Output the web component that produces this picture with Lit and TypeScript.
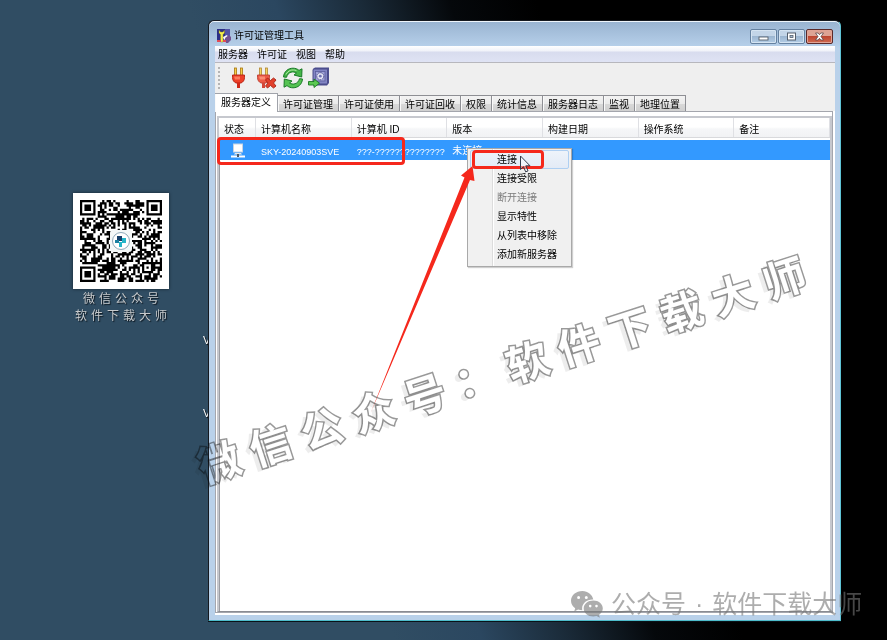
import { LitElement, html, css, svg } from "lit";
import { customElement } from "lit/decorators.js";
import { classMap } from "lit/directives/class-map.js";

const MENUS = ["服务器", "许可证", "视图", "帮助"];
const TABS = ["服务器定义", "许可证管理", "许可证使用", "许可证回收", "权限", "统计信息", "服务器日志", "监视", "地理位置"];
const COLUMNS = ["状态", "计算机名称", "计算机 ID", "版本", "构建日期", "操作系统", "备注"];
const ACTIONS = [
  { label: "连接", hot: true },
  { label: "连接受限" },
  { label: "断开连接", disabled: true },
  { label: "显示特性" },
  { label: "从列表中移除" },
  { label: "添加新服务器" },
];

const spread = (text: string) => [...text].map((ch) => html`<span>${ch}</span>`);

/** Dark modules of the QR card as one path, 37 modules a side. */
function qrPath(): string {
  const n = 37;
  let seed = 20240903;
  const rand = () => {
    seed = (seed * 1103515245 + 12345) & 0x7fffffff;
    return (seed >> 12) / 0x7ffff;
  };
  const finder = (x: number, y: number) => {
    for (const [fx, fy] of [[0, 0], [n - 7, 0], [0, n - 7]]) {
      const dx = x - fx;
      const dy = y - fy;
      if (dx >= -1 && dx <= 7 && dy >= -1 && dy <= 7) {
        const d = Math.max(Math.abs(dx - 3), Math.abs(dy - 3));
        return d === 3 || d <= 1;
      }
    }
    return undefined;
  };
  let d = "";
  for (let y = 0; y < n; y++) {
    for (let x = 0; x < n; x++) {
      let on = rand() < 0.56;
      const a = Math.max(Math.abs(x - 30), Math.abs(y - 30));
      if (a <= 2) on = a !== 1;
      const f = finder(x, y);
      if (f !== undefined) on = f;
      if (on) d += `M${x} ${y}h1v1h-1z`;
    }
  }
  return d;
}

const plug = svg`
  <rect x="3.5" y="1" width="2" height="8" fill="#f6d24a" stroke="#a87410" stroke-width=".8"/>
  <rect x="9.5" y="1" width="2" height="8" fill="#f6d24a" stroke="#a87410" stroke-width=".8"/>
  <path d="M1.5 8h12v2.500c0 3-1.500 4.500-3.500 5.500H5c-2-1-3.500-2.500-3.500-5.500z" fill="#ee4028" stroke="#b32012" stroke-width=".9"/>
  <path d="M3 9.500h6v3H4z" fill="#ff8a6c" opacity=".8"/>
  <rect x="6" y="16" width="3" height="5" fill="#cf2a1a"/>`;

@customElement("app-root")
export class AppRoot extends LitElement {
  static styles = css`
    :host {
      display: block;
      font: 10px/14px "Liberation Sans", "Noto Sans CJK SC", sans-serif;
      color: #000;
    }
    * { box-sizing: border-box; }
    button {
      font: inherit;
      color: inherit;
      background: none;
      border: 0;
      padding: 0;
      margin: 0;
      text-align: left;
      white-space: nowrap;
    }
    .desktop {
      position: relative;
      min-height: 100vh;
      overflow: hidden;
      display: grid;
      grid-template-columns: 208px minmax(0, 1fr);
      padding: 20px 46px 19px 0;
      background: linear-gradient(72deg, #304d63 0%, #304d63 36%, #2b4760 44%, #1a2a38 52%, #05080b 60%, #000 68%);
    }
    .side {
      position: relative;
      padding: 173px 0 0 73px;
    }
    .card { width: 96px; }
    .qr {
      display: block;
      width: 96px;
      height: 96px;
      background: #fff;
      box-shadow: 0 0 3px #14222e;
    }
    .caption {
      display: flex;
      justify-content: center;
      gap: 4px;
      font-family: "Noto Sans CJK SC", sans-serif;
      font-size: 12px;
      line-height: 17px;
      color: #c6c9cb;
      text-shadow: 1px 1px 1px #0b141c;
    }
    .icon-label {
      position: absolute;
      left: 203px;
      color: #fff;
      font-size: 11px;
      text-shadow: 1px 1px 1px #000;
    }
    .l1 { top: 313px; }
    .l2 { top: 386px; }

    .window {
      position: relative;
      display: flex;
      flex-direction: column;
      border: 1px solid #15191f;
      border-right-color: #5fc4d6;
      border-bottom-color: #4dbccb;
      border-radius: 6px 6px 0 0;
      padding: 0 5px 5px 6px;
      background: linear-gradient(#98b3d0, #b7d0ea 26px, #b9d1ea 27px);
      box-shadow: inset 0 1px #eef5fb, 0 1px #0a1218;
      min-width: 0;
    }
    .title {
      display: flex;
      align-items: center;
      height: 25px;
      padding: 5px 2px 0 2px;
      gap: 3px;
    }
    .title h1 { margin: 0; flex: 1; font: inherit; }
    .app-icon { width: 14px; height: 14px; }
    .caption-btns { display: flex; gap: 1px; }
    .cbtn {
      width: 27px;
      height: 15px;
      display: grid;
      place-items: center;
      border: 1px solid #6581a0;
      border-radius: 2px;
      background: linear-gradient(#c3d5e8 45%, #9cb6d1 50%, #b4cde6);
      box-shadow: inset 0 0 0 1px #d5e4f2;
    }
    .cbtn.close {
      border-color: #5b2a2a;
      background: linear-gradient(#dda394 45%, #bd4530 50%, #cf6a50);
      box-shadow: inset 0 0 0 1px #e0a395;
    }
    .client {
      flex: 1;
      display: flex;
      flex-direction: column;
      background: #fff;
      min-width: 0;
    }
    .menubar {
      display: flex;
      gap: 9px;
      height: 17px;
      padding: 1px 3px 0;
      border-bottom: 1px solid #b7b7bd;
      background: linear-gradient(#fff, #f0f2f9 5px, #d8dcee 6px, #dfe3f4);
    }
    .head { background: #efefef; }
    .toolbar {
      display: flex;
      height: 30px;
      padding: 4px 0 0 3px;
    }
    .grip {
      width: 2px;
      height: 24px;
      margin-right: 10px;
      background: repeating-linear-gradient(#b5b5b5 0 2px, #efefef 2px 4px);
    }
    .tool { width: 22px; height: 22px; margin-right: 4px; }
    .tool svg { display: block; width: 22px; height: 22px; }
    .tabs { display: flex; align-items: flex-end; height: 18px; }
    .tab {
      height: 16px;
      padding: 2px 5px 0;
      border-top: 1px solid #8e8f94;
      border-right: 1px solid #8e8f94;
      background: linear-gradient(#f3f3f3, #ebebeb 50%, #d8d8d8 55%, #d0d0d0);
      box-shadow: inset 1px 0 #fafafa;
    }
    .tab.on {
      height: 19px;
      width: 63px;
      margin-bottom: -1px;
      padding-bottom: 3px;
      position: relative;
      text-align: center;
      background: #fff;
      border-color: #a0a3aa;
    }
    .page {
      flex: 1;
      display: flex;
      margin: 0 2px 2px 0;
      padding: 4px 0 0 1px;
      border: 1px solid #a4a6ad;
    }
    .list {
      flex: 1;
      min-width: 0;
      border: 2px solid #c6c8ce;
      border-bottom: 1px solid #8a8c92;
      box-shadow: inset 1px 0 #9a9ca2, inset 0 1px #9a9ca2;
    }
    table { width: 100%; table-layout: fixed; border-collapse: separate; border-spacing: 0; }
    col.state { width: 37px; }
    th, td {
      padding: 1px 0 0 5px;
      text-align: left;
      font-weight: 400;
      white-space: nowrap;
    }
    th {
      height: 22px;
      padding-top: 3px;
      border-bottom: 2px solid #fff;
      background: linear-gradient(to left, #dfe0e4 1px, #0000 1px), linear-gradient(#fff 45%, #f5f6f8 55%, #f1f2f4);
      background-clip: padding-box;
      box-shadow: inset 0 -1px #d8d9dc;
    }
    tbody tr { background: #3399ff; color: #fff; }
    td { height: 20px; }
    td.mono { font-size: 9px; padding-top: 3px; }
    .pc { display: block; width: 16px; height: 16px; margin-left: 6px; }

    .popup {
      position: absolute;
      left: 467px;
      top: 148px;
      width: 105px;
      padding: 1px 2px 2px 2px;
      border: 1px solid #a9a9a9;
      background: linear-gradient(to right, #f1f1f1 24px, #dcdcdc 24px, #dcdcdc 25px, #fff 25px, #fff 26px, #f0f0f0 26px);
      display: flex;
      flex-direction: column;
      box-shadow: 1px 1px 1px #00000030;
    }
    .item {
      height: 19px;
      padding: 0 0 0 26px;
      border: 1px solid #0000;
      border-radius: 2px;
    }
    .item.hot { border-color: #aecff2; background: linear-gradient(#eef3fa, #e3ebf6); }
    .item:disabled { color: #7b7b7b; }
    .mark {
      position: absolute;
      border: 3px solid #f5281c;
      border-radius: 4px;
      pointer-events: none;
    }
    .m-row { left: 217px; top: 137px; width: 188px; height: 28px; }
    .m-item { left: 472px; top: 150px; width: 72px; height: 19px; }
    .arrow { position: absolute; left: 360px; top: 150px; width: 180px; height: 270px; pointer-events: none; }

    .banner {
      position: absolute;
      left: 183px;
      top: 338px;
      display: flex;
      gap: 12px;
      font: 700 42px/60px "Noto Sans CJK SC", sans-serif;
      color: #fff;
      -webkit-text-stroke: 3px #999;
      paint-order: stroke fill;
      text-shadow: -6px 2px 0 #00000012;
      transform: rotate(-18deg);
      pointer-events: none;
      mix-blend-mode: multiply;
    }
    .credit {
      position: absolute;
      left: 571px;
      bottom: 20px;
      display: flex;
      align-items: center;
      gap: 8px;
      font: 400 25px/32px "Liberation Sans", "Noto Sans CJK SC", sans-serif;
      color: #777;
      white-space: pre;
      opacity: 0.6;
    }
    .credit svg { width: 32px; height: 27px; }
    .dot { padding: 0 2px; }
  `;

  render() {
    return html`
      <main class="desktop">
        <aside class="side">
          <div class="card">
            <svg class="qr" viewBox="0 0 96 96" role="img" aria-label="QR">
              <path transform="translate(7 7) scale(2.216)" d=${qrPath()} fill="#000" shape-rendering="geometricPrecision"/>
              <rect x="37" y="37" width="22" height="22" rx="3" fill="#f4f8f8"/>
              <circle cx="48" cy="48" r="8.500" fill="#fff" stroke="#8fa9b8"/>
              <path d="M44 43h5v5h-5z" fill="#15406b"/>
              <path d="M49 45h4v5h-4zM46 49h3v5h-3z" fill="#25b5c8"/>
              <path d="M42 47h4v3h-4z" fill="#1a7fa0"/>
            </svg>
            <div class="caption">${spread("微信公众号")}</div>
            <div class="caption">${spread("软件下载大师")}</div>
          </div>
          <span class="icon-label l1">V</span>
          <span class="icon-label l2">V</span>
        </aside>

        <section class="window">
          <header class="title">
            <svg class="app-icon" viewBox="0 0 14 14">
              <rect width="12" height="12" fill="#2c2f86"/>
              <path d="M8 0h5v8H8z" fill="#5353a6"/>
              <path d="M2 1v3l1.500 1.500V13h2.500V5.500L7.500 4V1L6 3H3.500z" fill="#f3ee4e" stroke="#7c7a20" stroke-width=".4"/>
              <path d="M6 8l4-2 1 2-4 3z" fill="#fff"/>
              <path d="M8 9l4-3 2 2v3l-3 3H9z" fill="#73518f"/>
              <path d="M0 11h4v2H0zM6 11h3v2H6z" fill="#e24a56"/>
            </svg>
            <h1>许可证管理工具</h1>
            <div class="caption-btns">
              <button class="cbtn" aria-label="最小化">
                <svg width="11" height="9"><rect x="1" y="5" width="9" height="3" fill="#fff" stroke="#555f6c" stroke-width=".9"/></svg>
              </button>
              <button class="cbtn" aria-label="最大化">
                <svg width="11" height="9"><rect x="1.500" y="1" width="8" height="7" fill="#fff" stroke="#555f6c"/><rect x="4" y="3.500" width="3" height="2" fill="#a9bfd6" stroke="#555f6c" stroke-width=".8"/></svg>
              </button>
              <button class="cbtn close" aria-label="关闭">
                <svg width="11" height="9"><path d="M1.500 1h2.700L5.500 2.700 6.800 1h2.700L7 4.500 9.500 8H6.800L5.500 6.300 4.200 8H1.500L4 4.500z" fill="#fff" stroke="#5d4548" stroke-width=".8"/></svg>
              </button>
            </div>
          </header>
          <div class="client">
            <div class="head">
              <nav class="menubar">${MENUS.map((m) => html`<button>${m}</button>`)}</nav>
              <div class="toolbar">
                <span class="grip"></span>
                <button class="tool" aria-label="连接"><svg viewBox="-1 0 22 22">${plug}</svg></button>
                <button class="tool" aria-label="断开连接">
                  <svg viewBox="0 0 22 22">
                    <g opacity=".85">${plug}</g>
                    <path d="M9.500 13l2-2 3 2.500 3-2.500 2.500 2-2.500 3 2.500 3-2.500 2-3-2.500-3 2.500-2-2 2.500-3z" fill="#e2402c" stroke="#a62215" stroke-width=".9"/>
                  </svg>
                </button>
                <button class="tool" aria-label="刷新">
                  <svg viewBox="0 0 22 22">
                    <path d="M1.500 10C2 4.500 6 1.200 11 1.200c2.500 0 4.500.8 6 2.200l3-1.600-.3 8.200-7.700-2 2.500-2C11.500 4 6 4.500 4.500 10.300z" fill="#45b648" stroke="#187a26"/>
                    <path d="M20.500 12c-.5 5.500-4.500 8.800-9.500 8.800-2.500 0-4.500-.8-6-2.200l-3 1.600.3-8.200 7.700 2-2.500 2c3 2 8.500 1.500 10-4.300z" fill="#55c352" stroke="#187a26"/>
                    <path d="M4 7.500C6 3.500 10 2 14.500 3.600" fill="none" stroke="#b4e8a6"/>
                  </svg>
                </button>
                <button class="tool" aria-label="许可证库">
                  <svg viewBox="0 0 22 22">
                    <path d="M5 2l2-1.500h14V16l-2 2.500H5z" fill="#4d4f8f"/>
                    <rect x="5" y="2" width="14.500" height="15" rx="1" fill="#8285c4" stroke="#4a4c8a"/>
                    <rect x="7.500" y="4.500" width="9.500" height="9.500" fill="#9ea1d6" stroke="#5a5c9c" stroke-width=".8"/>
                    <circle cx="12.300" cy="9.200" r="3.500" fill="#e3e4f5" stroke="#4a4c8a" stroke-dasharray="1.500 .8"/>
                    <circle cx="12.300" cy="9.200" r="1.400" fill="#6d70b4"/>
                    <path d="M.5 14.500H6V12l5.500 4.200L6 20.500V18H.5z" fill="#5cc952" stroke="#1c7a24" stroke-width=".9"/>
                  </svg>
                </button>
              </div>
              <div class="tabs" role="tablist">
                ${TABS.map((t, i) => html`<button role="tab" class=${classMap({ tab: true, on: i === 0 })} aria-selected=${i === 0}>${t}</button>`)}
              </div>
            </div>
            <div class="page">
              <div class="list">
                <table>
                  <colgroup><col class="state" />${COLUMNS.slice(1).map(() => html`<col />`)}</colgroup>
                  <thead><tr>${COLUMNS.map((c) => html`<th>${c}</th>`)}</tr></thead>
                  <tbody>
                    <tr>
                      <td>
                        <svg class="pc" viewBox="0 0 16 16">
                          <rect x="3.500" y="1" width="9" height="8" fill="#fff" stroke="#c7d4e2"/>
                          <path d="M5 10h6l1 1.500H4z" fill="#e8e8e8"/>
                          <path d="M1 12.500h14v2H1z" fill="#fff"/>
                          <path d="M7 11h2v3H7z" fill="#4b5866"/>
                        </svg>
                      </td>
                      <td class="mono">SKY-20240903SVE</td>
                      <td class="mono">???-??????????????</td>
                      <td>未连接</td>
                      <td></td><td></td><td></td>
                    </tr>
                  </tbody>
                </table>
              </div>
            </div>
          </div>
        </section>

        <div class="popup" role="menu">
          ${ACTIONS.map((a) => html`<button role="menuitem" class=${classMap({ item: true, hot: !!a.hot })} ?disabled=${!!a.disabled}>${a.label}</button>`)}
        </div>
        <div class="mark m-row"></div>
        <div class="mark m-item"></div>
        <svg class="arrow" viewBox="360 150 180 270">
          <path d="M371 412L464.500 177.500 461 175.500 472.500 166 474.500 181 470 180z" fill="#f5281c"/>
          <path d="M520.500 156v13.500l3-2.800 2.200 5.200 2.300-1-2.200-5.100h4.200z" fill="#ffffff66" stroke="#333a4a" stroke-width="1"/>
        </svg>
        <div class="banner">${spread("微信公众号：软件下载大师")}</div>
        <div class="credit">
          <svg viewBox="0 0 32 27">
            <path fill-rule="evenodd" fill="#777" d="M11.500 0C5 0 0 4.300 0 9.700c0 3 1.600 5.700 4.200 7.500L3.200 20.600l3.900-2c1.400.4 2.700.6 4.200.6-.1-.6-.2-1.200-.2-1.800 0-5 4.600-8.900 10.200-8.900h1C21.300 3.600 16.800 0 11.500 0zM7.600 4.900a1.500 1.500 0 110 3 1.500 1.500 0 010-3zm7.700 0a1.500 1.500 0 110 3 1.500 1.500 0 010-3z"/>
            <path fill-rule="evenodd" fill="#777" d="M22.300 9.600c-5.400 0-9.600 3.500-9.600 8s4.200 8 9.600 8c1.100 0 2.200-.2 3.300-.5l3.300 1.700-.9-2.900c2.300-1.500 3.800-3.700 3.800-6.300 0-4.500-4.200-8-9.500-8zm-3.100 4.200a1.300 1.300 0 110 2.600 1.300 1.300 0 010-2.600zm6.300 0a1.300 1.300 0 110 2.600 1.300 1.300 0 010-2.600z"/>
          </svg>
          <span>公众号<span class="dot"> · </span>软件下载大师</span>
        </div>
      </main>
    `;
  }
}
